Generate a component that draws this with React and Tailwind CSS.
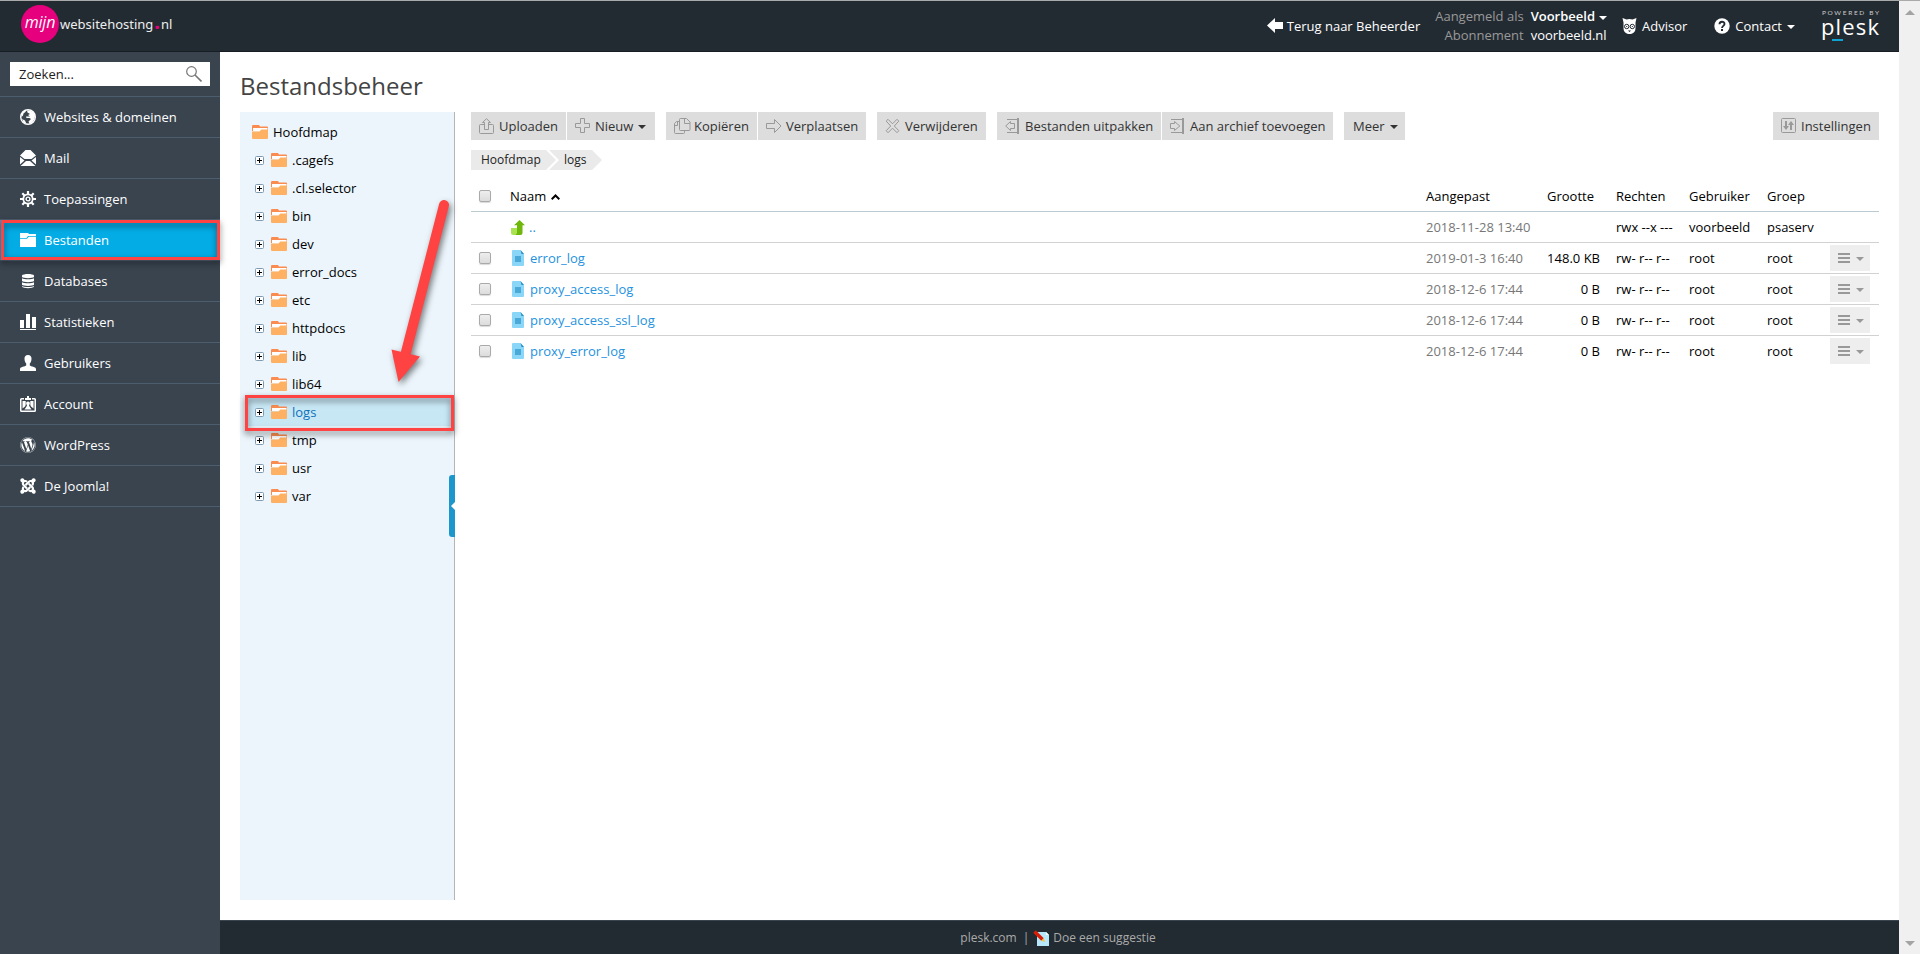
import React, { useState } from "react";
import { FaWordpress, FaJoomla } from "react-icons/fa";

const Svg = ({ w = 16, h = 16, children, className = "" }) => (
  <svg
    width={w}
    height={h}
    viewBox={`0 0 ${w} ${h}`}
    className={`shrink-0 ${className}`}
    fill="currentColor"
  >
    {children}
  </svg>
);

const GlobeIcon = () => (
  <Svg>
    <circle cx="8" cy="8" r="7.3" fill="none" stroke="currentColor" strokeWidth="1.4" />
    <path d="M7 1.500c4 0 7 1 8 5.500-.3 4-2.500 7-5.500 8L8.500 12.500 11 10 9.500 9H6.500L6 7.500h4L8 6 10 5 7.500 3.500z" />
    <path d="M2 4l3-2.500 1 1L3.500 4.500 3 6.500 1.500 8zM2 10l3 1.500L6.500 15l-3-1.500z" />
  </Svg>
);

const MailIcon = () => (
  <Svg>
    <path d="M0 5.500L5.500 0h5L16 5.500 11.500 9h-7z" />
    <path d="M0 7l4.500 3.500L0 14.500zM16 7l-4.500 3.500 4.500 4zM.5 16l5.500-5h4l5.500 5z" />
  </Svg>
);

const GearIcon = () => (
  <Svg>
    <g stroke="currentColor" strokeWidth="2.2" fill="none">
      <path d="M8 0v3M8 13v3M0 8h3M13 8h3M2.300 2.300l2.200 2.200M11.500 11.500l2.200 2.200M2.300 13.700l2.200-2.200M11.500 4.500l2.200-2.200" />
      <circle cx="8" cy="8" r="4.7" strokeWidth="1.8" />
      <circle cx="8" cy="8" r="1.9" strokeWidth="1.4" />
    </g>
  </Svg>
);

const FilesIcon = () => (
  <Svg>
    <path d="M0 1h8l1 1h7v2H8L6.500 6H0z" />
    <path d="M0 6.800h7L8.800 4.800H16V15H0z" />
  </Svg>
);

const DatabaseIcon = () => (
  <Svg>
    <path d="M2 2.500C3 .5 13 .5 14 2.500V4c-1 1.500-11 1.500-12 0zM2 5.300c2 1.300 10 1.300 12 0V8c-1 1.500-11 1.500-12 0zM2 9.300c2 1.300 10 1.300 12 0V11.800c-1 1.500-11 1.500-12 0zM2 13c2 1.300 10 1.300 12 0v.8c-1 1.800-11 1.800-12 0z" />
  </Svg>
);

const StatsIcon = () => (
  <Svg>
    <path d="M0 6h4v8H0zM6 0h4v14H6zM12 3h4v11h-4zM0 15h16v1H0z" />
  </Svg>
);

const UserIcon = () => (
  <Svg>
    <path d="M8 0c2.600 0 3.700 1.800 3.500 4-.1 2-.8 3.500-1.700 4.500v2c1 1 6.200 1.200 6.200 3.500v2H0v-2c0-2.300 5.200-2.500 6.200-3.500v-2C5.300 7.500 4.600 6 4.500 4 4.300 1.800 5.400 0 8 0z" />
  </Svg>
);

const AccountIcon = () => (
  <Svg>
    <path d="M7 0h2v2h2v2H5V2h2z" />
    <path d="M0 3.500A1.500 1.500 0 0 1 1.500 2H4v1.500H1.500v11h13v-11H12V2h2.500A1.500 1.500 0 0 1 16 3.500v11a1.500 1.500 0 0 1-1.500 1.500h-13A1.500 1.500 0 0 1 0 14.500z" />
    <path d="M2.500 5h3.200v4L5 10.500l-2.500 2zM13.500 5h-3.200v4l.7 1.500 2.500 2zM8 5.500c1.500 0 2 1 1.800 2.200L9 9.500l.5 1 2 3h-7l2-3 .5-1-.8-1.800C6 6.500 6.500 5.500 8 5.500z" />
  </Svg>
);

const FolderIcon = () => (
  <Svg h={14}>
    <path d="M0 1a1 1 0 0 1 1-1h6l1 1.500h7a1 1 0 0 1 1 1V6H0z" fill="#fb8c50" />
    <path d="M1 3h14.500v3H1z" fill="#fff" />
    <path d="M0 6.500h7.500L9.300 4.500H16V13a1 1 0 0 1-1 1H1a1 1 0 0 1-1-1z" fill="#ffb163" />
  </Svg>
);

const PlusBox = () => (
  <Svg w={9} h={9}>
    <rect x=".5" y=".5" width="8" height="8" rx="1" fill="#fff" stroke="#7f99ae" />
    <path d="M2 4h5v1H2zM4 2h1v5H4z" fill="#000" />
  </Svg>
);

const FileIcon = () => (
  <Svg w={12} h={16}>
    <path d="M1 0h7.500L12 4v11a1 1 0 0 1-1 1H1a1 1 0 0 1-1-1V1a1 1 0 0 1 1-1z" fill="#8ad6f8" />
    <path d="M8.500 0L12 4H9.500z" fill="#2a8fc0" />
    <path d="M3 6h6v6H3z" fill="#4aa9d6" />
  </Svg>
);

const UpIcon = () => (
  <Svg w={14} h={15}>
    <path d="M0 8h6v7H2a2 2 0 0 1-2-2z" fill="#aae352" />
    <path d="M8.500 0L14 5.300h-2.500V13a2 2 0 0 1-2 2H4.500L6 13V5.300H3z" fill="#6fb70b" />
  </Svg>
);

const Caret = ({ className = "" }) => (
  <Svg w={8} h={4} className={className}>
    <path d="M0 0h8L4 4z" />
  </Svg>
);

// outline icons of the toolbar
const Line = ({ children, w = 16 }) => (
  <svg
    width={w}
    height="16"
    viewBox={`0 0 ${w} 16`}
    className="shrink-0 text-[#999]"
    fill="none"
    stroke="currentColor"
  >
    {children}
  </svg>
);

const toolIcons = {
  upload: (
    <Line>
      <path d="M5.500 6.500h-4a1 1 0 0 0-1 1v7a1 1 0 0 0 1 1h12a1 1 0 0 0 1-1v-7a1 1 0 0 0-1-1h-4M5.500 11.500v-7H3.500L7.500.7 11.500 4.500H9.500v7z" />
    </Line>
  ),
  plus: (
    <Line>
      <path d="M5.500.5h4v5h5v4h-5v5h-4v-5h-5v-4h5z" />
    </Line>
  ),
  copy: (
    <Line w={17}>
      <path d="M5.500 3.500h-3l-2 2v9a1 1 0 0 0 1 1h8a1 1 0 0 0 1-1v-2M.5 7.500h3v-4M6.500.5h6l3.500 3.500v7.500a1 1 0 0 1-1 1H6.500a1 1 0 0 1-1-1v-10a1 1 0 0 1 1-1zM10.500.5v5H16" />
    </Line>
  ),
  move: (
    <Line>
      <path d="M.5 5.500h8v-4L15 8l-6.500 6.500v-4h-8z" />
    </Line>
  ),
  remove: (
    <Line>
      <path d="M3 1.300l4.500 4.500L12 1.300 13.800 3.100 9.300 8l4.500 4.700-1.800 2-4.500-4.500L3 14.700l-1.800-2L5.700 8 1.200 3.100z" strokeLinejoin="round" />
    </Line>
  ),
  unpack: (
    <Line>
      <path d="M2 1.500h11M2 14.500h11M9.500 5.500h-4V3.500L.7 8l4.800 4.500v-2h4z" />
      <path d="M13 0v16" strokeWidth="2" />
    </Line>
  ),
  pack: (
    <Line>
      <path d="M1 1.500h12M1 14.500h12M.5 5.500h4V3.500L9.800 8l-5.300 4.500v-2h-4z" />
      <path d="M13 0v16" strokeWidth="2" />
    </Line>
  ),
  settings: (
    <Line>
      <rect x=".5" y=".5" width="14" height="14" rx="1" />
      <path d="M5 3v8M10 4v8" strokeWidth="2" />
      <path d="M2 8h6L5 12zM7 7h6L10 3z" fill="currentColor" stroke="none" />
    </Line>
  ),
};

const menu = [
  { label: "Websites & domeinen", icon: <GlobeIcon /> },
  { label: "Mail", icon: <MailIcon /> },
  { label: "Toepassingen", icon: <GearIcon /> },
  { label: "Bestanden", icon: <FilesIcon /> },
  { label: "Databases", icon: <DatabaseIcon /> },
  { label: "Statistieken", icon: <StatsIcon /> },
  { label: "Gebruikers", icon: <UserIcon /> },
  { label: "Account", icon: <AccountIcon /> },
  { label: "WordPress", icon: <FaWordpress size={16} /> },
  {
    label: "De Joomla!",
    icon: <FaJoomla className="size-4 scale-110 overflow-visible" />,
  },
];

const folders = [
  ".cagefs",
  ".cl.selector",
  "bin",
  "dev",
  "error_docs",
  "etc",
  "httpdocs",
  "lib",
  "lib64",
  "logs",
  "tmp",
  "usr",
  "var",
];

const toolbar = [
  [
    { label: "Uploaden", icon: "upload", width: "w-[95px]" },
    { label: "Nieuw", icon: "plus", width: "w-[88px]", caret: true },
  ],
  [
    { label: "Kopiëren", icon: "copy", width: "w-[91px]" },
    { label: "Verplaatsen", icon: "move", width: "w-[108px]" },
  ],
  [{ label: "Verwijderen", icon: "remove", width: "w-[109px]" }],
  [
    { label: "Bestanden uitpakken", icon: "unpack", width: "w-[164px]" },
    { label: "Aan archief toevoegen", icon: "pack", width: "w-[171px]" },
  ],
  [{ label: "Meer", width: "w-[61px]", caret: true }],
];

const files = [
  { name: "error_log", date: "2019-01-3 16:40", size: "148.0 KB" },
  { name: "proxy_access_log", date: "2018-12-6 17:44", size: "0 B" },
  { name: "proxy_access_ssl_log", date: "2018-12-6 17:44", size: "0 B" },
  { name: "proxy_error_log", date: "2018-12-6 17:44", size: "0 B" },
];

const ROW = "grid grid-cols-[40px_1fr_121px_69px_73px_78px_63px_49px] items-center";

function ToolButton({ label, icon, width, caret }) {
  return (
    <button
      className={`flex h-7 items-center bg-[#ddd] text-[#333] whitespace-nowrap ${width} ${
        icon ? "pl-2" : "pl-[9px]"
      }`}
    >
      {icon && <span className="mr-1 w-4">{toolIcons[icon]}</span>}
      {label}
      {caret && <Caret className="ml-[5px] mt-0.5" />}
    </button>
  );
}

function Checkbox({ checked, onChange }) {
  return (
    <input
      type="checkbox"
      checked={checked}
      onChange={onChange}
      className="ml-2 block size-[12px] appearance-none rounded-[2px] border border-[#aaa] bg-gradient-to-b from-[#eee] to-[#dcdcdc] shadow-[0_1px_1px_rgba(0,0,0,0.15)] checked:bg-[#28aade]"
    />
  );
}

function Header() {
  return (
    <header className="flex h-[52px] shrink-0 border-t border-b border-t-[#aaa] border-b-[#171d22] bg-[#232b32] text-white">
      <div className="flex items-center pl-[21px] pb-1">
        <div className="flex size-[38px] items-center justify-center rounded-full bg-[#e6007e]">
          <span className="pb-1 font-['Open_Sans'] text-[16px] font-medium italic tracking-[-0.2px]">
            mijn
          </span>
        </div>
        <span className="ml-px flex items-baseline font-['Noto_Sans'] text-[13px] text-[#eee]">
          websitehosting
          <span className="mx-px text-[20px] leading-4 font-bold text-[#e6007e]">.</span>
          nl
        </span>
      </div>
      <div className="ml-auto flex items-center">
        <a className="mr-[15px] flex items-center gap-1">
          <Svg>
            <path d="M0 7.500L8 0v4h8v7H8v4z" />
          </Svg>
          Terug naar Beheerder
        </a>
        <div className="mr-[15px] grid grid-cols-[auto_auto] gap-x-[7px] leading-[19px]">
          <span className="text-right text-[#999]">Aangemeld als</span>
          <span className="flex items-center font-semibold">
            Voorbeeld <Caret className="ml-1 mt-0.5" />
          </span>
          <span className="text-right text-[#999]">Abonnement</span>
          <span>voorbeeld.nl</span>
        </div>
        <a className="mr-[27px] flex items-center gap-1">
          <Svg>
            <path d="M.5 0L4.500 1.500c2-.8 4-.8 6 0L14.500 0l-1 4.500V10c0 3.500-2 6-6 6s-6-2.500-6-6V4.500z" />
            <g fill="#fff" stroke="#232b32" strokeWidth="1">
              <circle cx="4.7" cy="8.5" r="2.2" />
              <circle cx="10.3" cy="8.5" r="2.2" />
            </g>
            <path d="M4.200 8h1v1h-1zM9.800 8h1v1h-1zM6 12.500h3L7.500 14z" fill="#232b32" />
          </Svg>
          Advisor
        </a>
        <a className="mr-[27px] flex items-center gap-[5px]">
          <Svg>
            <circle cx="8" cy="8" r="7.7" />
            <path d="M5.500 6.300C5.500 3 10.500 3 10.500 6c0 1.800-2.500 2-2.500 4" fill="none" stroke="#232b32" strokeWidth="1.9" />
            <path d="M7 11h2v2H7z" fill="#232b32" />
          </Svg>
          Contact
          <Caret className="mt-0.5" />
        </a>
        <svg width="58" height="36" viewBox="0 0 58 36" className="mr-[19px]">
          <text x="0" y="6.5" fontSize="6.5" fill="#ccc" textLength="57" fontFamily="Lato, sans-serif">
            POWERED BY
          </text>
          <text x="-1" y="27" fontSize="22" fill="#fff" textLength="58" fontFamily="Open Sans, sans-serif">
            plesk
          </text>
          <path d="M10 31h11v2H10z" fill="#0fa3d1" />
        </svg>
      </div>
    </header>
  );
}

function Sidebar({ active, onSelect }) {
  return (
    <aside className="w-[220px] shrink-0 bg-[#39444f] text-white">
      <div className="px-2.5 pt-2.5 pb-2.5 border-b border-[#4c5d6e]">
        <div className="flex h-6 items-center justify-between bg-white pr-2 pl-[9px] text-[#222]">
          Zoeken...
          <Svg className="text-[#777]">
            <circle cx="5.5" cy="5.5" r="4.8" fill="none" stroke="currentColor" strokeWidth="1.2" />
            <path d="M9 9l6.500 6.500" stroke="currentColor" strokeWidth="1.6" />
          </Svg>
        </div>
      </div>
      {menu.map((item) => (
        <div key={item.label} className="relative">
          <button
            onClick={() => onSelect(item.label)}
            className={`flex h-[41px] w-full items-center gap-2 border-b border-[#4c5d6e] pl-5 font-medium ${
              active === item.label ? "bg-[#04ace6]" : ""
            }`}
          >
            {item.icon}
            {item.label}
          </button>
          {item.label === "Bestanden" && (
            <div className="pointer-events-none absolute top-0 left-px z-10 h-10 w-[219px] border-3 border-[#ff4242] drop-shadow-[0_3px_3px_rgba(0,0,0,0.55)]" />
          )}
        </div>
      ))}
    </aside>
  );
}

function FolderTree({ current, onSelect }) {
  return (
    <div className="relative w-[215px] shrink-0 border-r border-[#b5b5b5] bg-[#ebf5fb] pt-1.5 text-black">
      <div className="flex h-7 items-center gap-[5px] pl-3">
        <FolderIcon />
        Hoofdmap
      </div>
      {folders.map((name) => (
        <div key={name} className="relative">
          <button
            onClick={() => onSelect(name)}
            className={`ml-2 flex h-7 w-[205px] items-center pl-[7px] ${
              current === name ? "bg-[#c8e7f5] text-[#0e72b8]" : ""
            }`}
          >
            <PlusBox />
            <span className="ml-[7px] mr-[5px]">
              <FolderIcon />
            </span>
            {name}
          </button>
          {name === "logs" && (
            <div className="pointer-events-none absolute -top-[3px] left-[5px] z-10 h-9 w-[209px] border-3 border-[#ff4242] drop-shadow-[0_3px_3px_rgba(0,0,0,0.55)]" />
          )}
        </div>
      ))}
      <div className="absolute top-[363px] -right-px flex h-[62px] w-1.5 items-center justify-end rounded-l-[3px] bg-[#1d97cb]">
        <svg width="4" height="8" viewBox="0 0 4 8">
          <path d="M4 0v8L0 4z" fill="#fff" />
        </svg>
      </div>
      {/* pointer to the logs folder */}
      <svg
        width="90"
        height="210"
        viewBox="0 0 90 210"
        className="pointer-events-none absolute top-[78px] left-[140px] overflow-visible drop-shadow-[2px_3px_3px_rgba(0,0,0,0.5)]"
      >
        <path d="M64 15L25 166" stroke="#ff4242" strokeWidth="10" strokeLinecap="round" />
        <path d="M11.500 159.500L40 166.500 18.500 192z" fill="#ff4242" />
      </svg>
    </div>
  );
}

function FileTable() {
  const [selected, setSelected] = useState([]);
  const toggle = (name) =>
    setSelected(
      selected.includes(name) ? selected.filter((n) => n !== name) : [...selected, name]
    );

  return (
    <div className="mt-[10px] text-black">
      <div className={`${ROW} h-8 border-b border-[#bccad2]`}>
        <Checkbox
          checked={selected.length === files.length}
          onChange={() =>
            setSelected(selected.length === files.length ? [] : files.map((f) => f.name))
          }
        />
        <span className="-ml-px flex items-center gap-[5px]">
          Naam
          <svg width="9" height="6" viewBox="0 0 9 6" className="mt-0.5">
            <path d="M.7 5.200L4.500 1.500l3.800 3.700" fill="none" stroke="#000" strokeWidth="2" />
          </svg>
        </span>
        <span>Aangepast</span>
        <span>Grootte</span>
        <span>Rechten</span>
        <span>Gebruiker</span>
        <span>Groep</span>
        <span />
      </div>
      <div className={`${ROW} h-[31px] border-b border-[#d2d2d2]`}>
        <span />
        <a className="flex items-center gap-1 text-[#2492e0]">
          <UpIcon />
          ..
        </a>
        <span className="text-[#777]">2018-11-28 13:40</span>
        <span />
        <span>rwx --x ---</span>
        <span>voorbeeld</span>
        <span>psaserv</span>
        <span />
      </div>
      {files.map((file) => (
        <div
          key={file.name}
          className={`${ROW} h-[31px] border-b border-[#d2d2d2] last:border-transparent`}
        >
          <Checkbox
            checked={selected.includes(file.name)}
            onChange={() => toggle(file.name)}
          />
          <a className="flex items-center gap-1.5 pl-px text-[#2492e0]">
            <FileIcon />
            {file.name}
          </a>
          <span className="text-[#777]">{file.date}</span>
          <span className="pr-4 text-right whitespace-nowrap">{file.size}</span>
          <span>rw- r-- r--</span>
          <span>root</span>
          <span>root</span>
          <button className="flex h-[26px] w-10 items-center gap-1.5 bg-[#eee] pl-2 text-[#999]">
            <Svg w={12} h={10}>
              <path d="M0 0h12v2H0zM0 4h12v2H0zM0 8h12v2H0z" />
            </Svg>
            <Caret className="mt-0.5" />
          </button>
        </div>
      ))}
    </div>
  );
}

export default function App() {
  const [active, setActive] = useState("Bestanden");
  const [folder, setFolder] = useState("logs");

  return (
    <div className="flex h-[954px] w-[1920px] overflow-hidden bg-white font-['Open_Sans','Noto_Sans',sans-serif] text-[13px] leading-5">
      <div className="flex w-[1899px] flex-col">
        <Header />
        <div className="flex flex-1">
          <Sidebar active={active} onSelect={setActive} />
          <div className="flex flex-1 flex-col">
            <main className="flex flex-1 flex-col pr-5 pb-5 pl-5">
              <h1 className="pt-[18px] text-[24px] leading-8 text-[#444]">Bestandsbeheer</h1>
              <div className="mt-2.5 flex flex-1">
                <FolderTree current={folder} onSelect={setFolder} />
                <section className="ml-4 flex-1">
                  <div className="flex gap-[11px]">
                    {toolbar.map((group, i) => (
                      <div key={i} className="flex gap-px">
                        {group.map((btn) => (
                          <ToolButton key={btn.label} {...btn} />
                        ))}
                      </div>
                    ))}
                    <div className="ml-auto">
                      <ToolButton label="Instellingen" icon="settings" width="w-[106px]" />
                    </div>
                  </div>
                  <nav className="mt-2.5 flex text-[12px] text-[#222]">
                    <a className="h-5 w-[87px] bg-[#eaeaea] pl-2.5 leading-5 [clip-path:polygon(0_0,75px_0,85px_50%,75px_100%,0_100%)]">
                      Hoofdmap
                    </a>
                    <a className="-ml-[9px] h-5 w-[53px] bg-[#eaeaea] pl-[15px] leading-5 [clip-path:polygon(0_0,43px_0,100%_50%,43px_100%,0_100%,10px_50%)]">
                      {folder}
                    </a>
                  </nav>
                  <FileTable />
                </section>
              </div>
            </main>
            <footer className="flex h-[34px] items-center justify-center border-t border-[#39444f] bg-[#232b32] pr-[3px] text-[12px] text-[#aaa]">
              <a>plesk.com</a>
              <span className="mr-1 ml-1.5">|</span>
              <Svg className="mr-1">
                <path d="M4 2h9l3 3v11H4z" fill="#b5e6fa" />
                <path d="M13 2l3 3h-3z" fill="#fff" />
                <path d="M1.500 1.500l8 8" stroke="#d81c06" strokeWidth="3.6" />
                <path d="M8.300 10.700l2.500-2.500 1.200 3.800z" fill="#f3c53b" />
              </Svg>
              <a>Doe een suggestie</a>
            </footer>
          </div>
        </div>
      </div>
      <div className="flex w-[21px] flex-col items-center justify-between border-t border-[#aaa] bg-[#f0f0f0] pt-[9px] pb-2 text-[#a3a3a3]">
        <Svg w={10} h={5}>
          <path d="M0 5h10L5 0z" />
        </Svg>
        <Svg w={10} h={5}>
          <path d="M0 0h10L5 5z" />
        </Svg>
      </div>
    </div>
  );
}
